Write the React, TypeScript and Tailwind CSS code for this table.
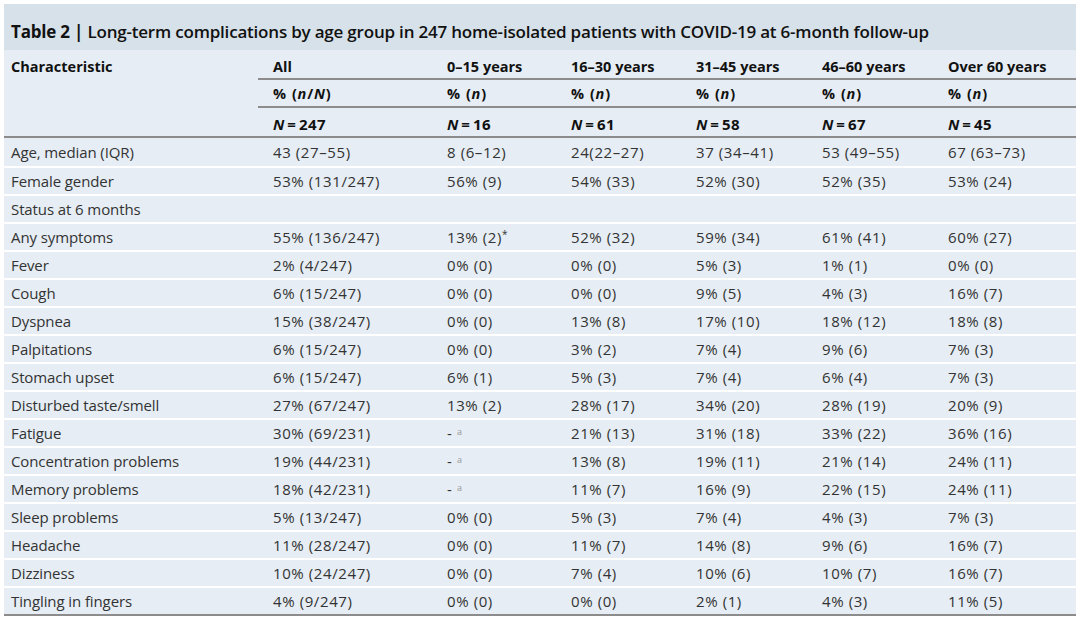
import React from "react";

type Row = { label: string; cells: string[] };

const rows: Row[] = [
  { label: "Age, median (IQR)", cells: ["43 (27–55)", "8 (6–12)", "24(22–27)", "37 (34–41)", "53 (49–55)", "67 (63–73)"] },
  { label: "Female gender", cells: ["53% (131/247)", "56% (9)", "54% (33)", "52% (30)", "52% (35)", "53% (24)"] },
  { label: "Status at 6 months", cells: ["", "", "", "", "", ""] },
  { label: "Any symptoms", cells: ["55% (136/247)", "13% (2)*", "52% (32)", "59% (34)", "61% (41)", "60% (27)"] },
  { label: "Fever", cells: ["2% (4/247)", "0% (0)", "0% (0)", "5% (3)", "1% (1)", "0% (0)"] },
  { label: "Cough", cells: ["6% (15/247)", "0% (0)", "0% (0)", "9% (5)", "4% (3)", "16% (7)"] },
  { label: "Dyspnea", cells: ["15% (38/247)", "0% (0)", "13% (8)", "17% (10)", "18% (12)", "18% (8)"] },
  { label: "Palpitations", cells: ["6% (15/247)", "0% (0)", "3% (2)", "7% (4)", "9% (6)", "7% (3)"] },
  { label: "Stomach upset", cells: ["6% (15/247)", "6% (1)", "5% (3)", "7% (4)", "6% (4)", "7% (3)"] },
  { label: "Disturbed taste/smell", cells: ["27% (67/247)", "13% (2)", "28% (17)", "34% (20)", "28% (19)", "20% (9)"] },
  { label: "Fatigue", cells: ["30% (69/231)", "-a", "21% (13)", "31% (18)", "33% (22)", "36% (16)"] },
  { label: "Concentration problems", cells: ["19% (44/231)", "-a", "13% (8)", "19% (11)", "21% (14)", "24% (11)"] },
  { label: "Memory problems", cells: ["18% (42/231)", "-a", "11% (7)", "16% (9)", "22% (15)", "24% (11)"] },
  { label: "Sleep problems", cells: ["5% (13/247)", "0% (0)", "5% (3)", "7% (4)", "4% (3)", "7% (3)"] },
  { label: "Headache", cells: ["11% (28/247)", "0% (0)", "11% (7)", "14% (8)", "9% (6)", "16% (7)"] },
  { label: "Dizziness", cells: ["10% (24/247)", "0% (0)", "7% (4)", "10% (6)", "10% (7)", "16% (7)"] },
  { label: "Tingling in fingers", cells: ["4% (9/247)", "0% (0)", "0% (0)", "2% (1)", "4% (3)", "11% (5)"] },
];

const groups = ["All", "0–15 years", "16–30 years", "31–45 years", "46–60 years", "Over 60 years"];
const counts = ["247", "16", "61", "58", "67", "45"];

const cols = "grid grid-cols-[254px_174px_124px_125px_126px_126px_143px]";

function Cell({ value }: { value: string }) {
  if (value === "-a") {
    return (
      <span>
        - <sup className="text-[9px] text-[#999]">a</sup>
      </span>
    );
  }
  if (value.endsWith("*")) {
    return (
      <span>
        {value.slice(0, -1)}
        <sup className="text-[10px] tracking-normal">*</sup>
      </span>
    );
  }
  return <span>{value}</span>;
}

export default function App() {
  return (
    <div className="w-[1080px] h-[621px] bg-white p-1 font-['Open_Sans',sans-serif] overflow-hidden">
      <div className="w-[1072px] bg-[#e6edf4]">
        <div className="h-[46px] bg-[#d7e1ea] px-[7px] pt-[16px] text-[17px] leading-[24px] font-bold text-[#111] tracking-[-0.2px]">
          Table 2 | <span className="font-semibold">Long-term complications by age group in 247 home-isolated patients with COVID-19 at 6-month follow-up</span>
        </div>

        <div className={`${cols} border-b-2 border-[#8c8c8c] text-[14.5px] font-bold text-[#111]`}>
          <div className="row-span-3 pl-[7px] pt-[6px]">Characteristic</div>
          {groups.map((g) => (
            <div key={g} className="h-[30px] pl-[15px] pt-[6px] border-b-2 border-[#8c8c8c]">
              {g}
            </div>
          ))}
          {groups.map((g, i) => (
            <div key={"p" + g} className="h-[28px] pl-[15px] pt-[3px] border-b-2 border-[#8c8c8c] tracking-[0.8px]">
              {i === 0 ? (
                <>%<span className="ml-[5px]">(</span><i>n</i>/<i>N</i>)</>
              ) : (
                <>%<span className="ml-[5px]">(</span><i>n</i>)</>
              )}
            </div>
          ))}
          {counts.map((c) => (
            <div key={"n" + c} className="h-[28px] pl-[15px] pt-[5px] text-[15px]">
              <i>N</i>
              <span className="mx-[3px]">=</span>
              <span className="tracking-[0.5px]">{c}</span>
            </div>
          ))}
        </div>

        <div className="text-[15px] text-[#333]">
          {rows.map((r, idx) => (
            <div
              key={r.label}
              className={`${cols} h-[28px] items-center pt-[1px] ${idx === 0 ? "" : "border-t-2 border-white"}`}
            >
              <div className="pl-[7px] tracking-[-0.1px]">{r.label}</div>
              {r.cells.map((c, i) => (
                <div key={i} className="pl-[15px] tracking-[0.6px]">
                  <Cell value={c} />
                </div>
              ))}
            </div>
          ))}
        </div>
        <div className="h-[2px] bg-[#8c8c8c]" />
      </div>
    </div>
  );
}
